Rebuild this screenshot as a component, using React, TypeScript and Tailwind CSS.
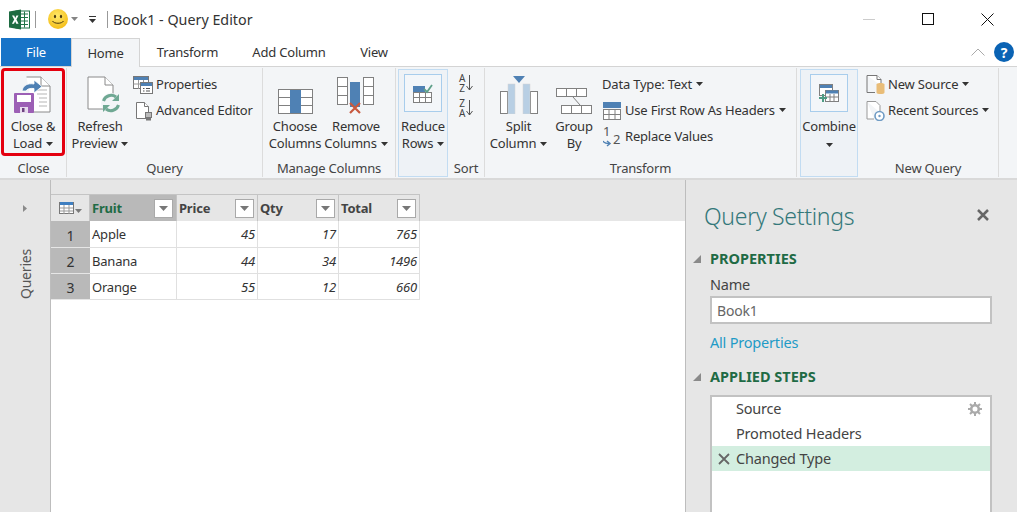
import type { ReactNode } from 'react'

function Caret({ className = '' }: { className?: string }) {
  return (
    <svg width="7" height="4" viewBox="0 0 7 4" className={`inline-block shrink-0 ${className}`}>
      <path d="M0 0h7L3.5 4z" fill="#333" />
    </svg>
  )
}

function ExcelIcon() {
  return (
    <svg width="21" height="21" viewBox="0 0 21 21">
      <rect x="7" y="2" width="13.5" height="17" fill="#fff" stroke="#217346" />
      <path d="M12 5h7M12 8.500h7M12 12h7M12 15.500h7M15.500 2.500v16" stroke="#217346" strokeWidth="1" />
      <path d="M0 2.500 12 .5v20L0 18.500z" fill="#1d6b41" />
      <path d="M3 6.500h2.200L6.300 9l1.100-2.500h2.100l-2.100 4 2.200 4.300H7.300L6.200 12.200 5 14.800H2.900l2.300-4.300z" fill="#fff" />
    </svg>
  )
}

function Smiley() {
  return (
    <svg width="20" height="20" viewBox="0 0 20 20">
      <defs>
        <radialGradient id="sm" cx="0.45" cy="0.35" r="0.7">
          <stop offset="0" stopColor="#ffe96a" />
          <stop offset="1" stopColor="#f4bb12" />
        </radialGradient>
      </defs>
      <circle cx="10" cy="10" r="10" fill="url(#sm)" />
      <ellipse cx="7" cy="7.500" rx="1.100" ry="1.700" fill="#4a3a10" />
      <ellipse cx="13" cy="7.500" rx="1.100" ry="1.700" fill="#4a3a10" />
      <path d="M4.500 12c1.500 3 9.500 3 11 0" fill="none" stroke="#4a3a10" strokeWidth="1" />
    </svg>
  )
}

function CloseLoadIcon() {
  return (
    <svg width="40" height="38" viewBox="0 0 40 38">
      <path d="M13.500 1H28l9 9v26H20" fill="#fff" stroke="#8a8a8a" />
      <path d="M28 1v9h9" fill="#fff" stroke="#8a8a8a" />
      <path d="M24 14h10M24 18h10M26 22h8M26 26h8M26 30h8" stroke="#b5b5b5" />
      <path d="M9 15c1-6 6-8 12-7V4l8 6.500-8 6.500v-4.500c-4-.5-7 .5-8 2.500z" fill="#4f81b4" stroke="#fff" strokeWidth=".8" />
      <rect x="1" y="17" width="20" height="20" rx="1" fill="#9c5fb5" />
      <rect x="4" y="19" width="14" height="7" fill="#fff" />
      <rect x="7" y="31" width="8" height="6" fill="#e8dcee" />
      <rect x="9" y="32" width="2.500" height="4" fill="#6d4280" />
    </svg>
  )
}

function RefreshIcon() {
  return (
    <svg width="34" height="38" viewBox="0 0 34 38">
      <path d="M1 1h17l8 8v24H1z" fill="#fff" stroke="#8a8a8a" />
      <path d="M18 1v8h8" fill="#fff" stroke="#8a8a8a" />
      <circle cx="24" cy="27" r="10" fill="#f3f5f7" />
      <path d="M16.500 25a8 8 0 0 1 12.500-4" fill="none" stroke="#6fa893" strokeWidth="3" />
      <path d="M31.500 29a8 8 0 0 1-12.500 4" fill="none" stroke="#6fa893" strokeWidth="3" />
      <path d="M32 18v7h-7zM16 36v-7h7z" fill="#6fa893" />
    </svg>
  )
}

function PropertiesIcon() {
  return (
    <svg width="20" height="18" viewBox="0 0 20 18">
      <rect x=".5" y=".5" width="15" height="12" fill="#fff" stroke="#777" />
      <rect x="1" y="1" width="14" height="3" fill="#4f81b4" />
      <path d="M.5 8h15M5.500 4v9M10.500 4v9" stroke="#999" />
      <rect x="7.500" y="6.500" width="12" height="11" fill="#fff" stroke="#777" />
      <rect x="8" y="7" width="11" height="3" fill="#4f81b4" />
      <path d="M10 12.500h1.500M13 12.500h4M10 15h1.500M13 15h4" stroke="#555" />
    </svg>
  )
}

function AdvancedIcon() {
  return (
    <svg width="18" height="19" viewBox="0 0 18 19" className="ml-[2px]">
      <path d="M1.500 .5h8l4 4v12h-12z" fill="#fff" stroke="#777" />
      <path d="M9.500 .5v4h4" fill="#fff" stroke="#777" />
      <path d="M10 10h7v6h-7zM11 16h5v2.500h-5z" fill="#777" />
      <path d="M11 12h5M11 14h5" stroke="#fff" />
    </svg>
  )
}

function ChooseColumnsIcon() {
  return (
    <svg width="35" height="25" viewBox="0 0 35 25">
      <rect x=".5" y=".5" width="34" height="24" fill="#fff" stroke="#808080" />
      <path d="M.5 8.500h34M.5 16.500h34" stroke="#808080" />
      <rect x="12" y="1" width="11" height="23" fill="#4f81b4" />
    </svg>
  )
}

function RemoveColumnsIcon() {
  return (
    <svg width="38" height="37" viewBox="0 0 38 37">
      <rect x=".5" y=".5" width="10" height="27" fill="#fff" stroke="#808080" />
      <rect x="26.500" y=".5" width="10" height="27" fill="#fff" stroke="#808080" />
      <path d="M.5 9.500h10M.5 18.500h10M26.500 9.500h10M26.500 18.500h10" stroke="#808080" />
      <rect x="13" y="5" width="10" height="25" fill="#4f81b4" />
      <path d="M13 26l10 10M23 26 13 36" stroke="#c8593f" strokeWidth="2.200" />
    </svg>
  )
}

function ReduceRowsIcon() {
  return (
    <svg width="20" height="19" viewBox="0 0 20 19">
      <rect x=".5" y="8.500" width="18" height="10" fill="#fff" stroke="#808080" />
      <path d="M.5 13.500h18M6.500 8v11M12.500 8v11" stroke="#808080" />
      <rect x="0" y="2" width="12" height="6" fill="#4f81b4" />
      <path d="M11 5l3 3 5-7" fill="none" stroke="#5fa08a" strokeWidth="1.800" />
    </svg>
  )
}

function SortIcon({ letters }: { letters: string }) {
  return (
    <div className="flex items-center h-[25px] gap-[1px]">
      <div className="whitespace-pre-line text-center text-[10px] leading-[10px] text-[#444]">{letters}</div>
      <svg width="7" height="18" viewBox="0 0 7 18">
        <path d="M3.500 1v15M.5 12l3 4 3-4" fill="none" stroke="#555" />
      </svg>
    </div>
  )
}

function SplitColumnIcon() {
  return (
    <svg width="38" height="38" viewBox="0 0 38 38">
      <rect x=".5" y="15.500" width="7" height="22" fill="#fff" stroke="#808080" />
      <rect x="30.500" y="15.500" width="7" height="22" fill="#fff" stroke="#808080" />
      <rect x="8" y="8" width="7" height="30" fill="#b8cfe4" stroke="#d4d4d4" strokeWidth=".5" />
      <rect x="23" y="8" width="7" height="30" fill="#b8cfe4" stroke="#d4d4d4" strokeWidth=".5" />
      <path d="M13 0h12l-6 7z" fill="#4f81b4" />
    </svg>
  )
}

function GroupByIcon() {
  return (
    <svg width="37" height="26" viewBox="0 0 37 26">
      <rect x=".5" y=".5" width="30" height="8" fill="#fff" stroke="#808080" />
      <path d="M10.500 1v8M20.500 1v8" stroke="#808080" />
      <path d="M17 9l7 8" stroke="#808080" />
      <rect x="5.500" y="17.500" width="30" height="8" fill="#fff" stroke="#808080" />
      <path d="M15.500 18v8M25.500 18v8" stroke="#808080" />
    </svg>
  )
}

function FirstRowIcon() {
  return (
    <svg width="20" height="18" viewBox="0 0 20 18">
      <rect x="1" y="0" width="18" height="6" fill="#4f81b4" />
      <rect x="1.500" y="7.500" width="17" height="10" fill="#fff" stroke="#808080" />
      <path d="M1 12.500h18M7 8v10M13 8v10" stroke="#808080" />
    </svg>
  )
}

function ReplaceIcon() {
  return (
    <div className="relative w-[20px] h-[22px] text-[#555] text-[13px]">
      <span className="absolute left-[1px] top-[-4px]">1</span>
      <span className="absolute left-[11px] top-[4px]">2</span>
      <svg width="9" height="7" viewBox="0 0 9 7" className="absolute left-[1px] top-[14px]">
        <path d="M0 1c1 2 3 2.500 6 2.500M4 1l3 2.500L4 6" fill="none" stroke="#4f81b4" strokeWidth="1.500" />
      </svg>
    </div>
  )
}

function CombineIcon() {
  return (
    <svg width="20" height="19" viewBox="0 0 20 19">
      <rect x=".5" y=".5" width="13" height="11" fill="#fff" stroke="#808080" />
      <rect x="1" y="1" width="12" height="3" fill="#4f81b4" />
      <rect x="6.500" y="6.500" width="13" height="11" fill="#fff" stroke="#808080" />
      <rect x="7" y="6.500" width="12" height="3" fill="#4f81b4" />
      <path d="M7 13h12M11 10v8M15 10v8" stroke="#808080" />
      <path d="M4 10v8M0 14h8" stroke="#4f9c84" strokeWidth="2" />
    </svg>
  )
}

function NewSourceIcon() {
  return (
    <svg width="19" height="20" viewBox="0 0 19 20">
      <path d="M1 .5h10l4 4v6M8 17.500H1z" fill="#fff" stroke="#777" />
      <path d="M11 .5v4h4" fill="#fff" stroke="#777" />
      <path d="M1 .5v17h8" fill="none" stroke="#777" />
      <path d="M10.500 9.500c0-2 8-2 8 0v8c0 2-8 2-8 0z" fill="#e9bd78" />
    </svg>
  )
}

function RecentSourcesIcon() {
  return (
    <svg width="19" height="20" viewBox="0 0 19 20">
      <path d="M1 .5h9l4 4v7M8 18H1V.5" fill="#fff" stroke="#999" />
      <circle cx="13.500" cy="15" r="4.500" fill="#fff" stroke="#6f9bc4" strokeWidth="1.600" />
      <circle cx="13.500" cy="15" r="1.200" fill="#6f9bc4" />
    </svg>
  )
}

function BigButton({ width, icon, lines, caret }: { width: string; icon: ReactNode; lines: string[]; caret?: boolean }) {
  return (
    <div className={`${width} flex flex-col items-center shrink-0`}>
      <div className="h-[50px] pt-[8px] pb-[4px] flex items-end justify-center">{icon}</div>
      {lines.map((line, i) => (
        <div key={line} className="h-[17px] leading-[17px] whitespace-nowrap flex items-center gap-[4px]">
          {line}
          {caret && i === lines.length - 1 && <Caret />}
        </div>
      ))}
    </div>
  )
}

function SmallButton({ icon, label, caret, gap = 'gap-[3px]' }: { icon: ReactNode; label: string; caret?: boolean; gap?: string }) {
  return (
    <div className={`h-[26px] flex items-center whitespace-nowrap ${gap}`}>
      {icon}
      <span>{label}</span>
      {caret && <Caret className="ml-[1px] mb-[3px]" />}
    </div>
  )
}

function Group({ width, label, children, className = '' }: { width: string; label?: string; children: ReactNode; className?: string }) {
  return (
    <div className={`${width} shrink-0 flex flex-col border-r border-[#dcdcdc] my-[1px] ${className}`}>
      <div className="flex-1 flex">{children}</div>
      <div className="h-[19px] pt-[1px] leading-[19px] text-center text-[#444]">{label}</div>
    </div>
  )
}

function ToggleButton({ width, icon, lines, caret, iconBox }: { width: string; icon: ReactNode; lines: ReactNode[]; caret?: boolean; iconBox: string }) {
  return (
    <div className={`${width} shrink-0 my-[1px] mt-[2px] bg-[#eef2f6] border border-[#c2dcf2] flex flex-col items-center`}>
      <div className={`${iconBox} mt-[4px] mb-[6px] border border-[#a8cdec] bg-[#f3f6f9] flex items-center justify-center`}>{icon}</div>
      {lines.map((line, i) => (
        <div key={i} className="h-[17px] leading-[17px] whitespace-nowrap flex items-center gap-[4px]">
          {line}
          {caret && i === lines.length - 1 && <Caret />}
        </div>
      ))}
    </div>
  )
}

const rows = [
  ['1', 'Apple', '45', '17', '765'],
  ['2', 'Banana', '44', '34', '1496'],
  ['3', 'Orange', '55', '12', '660'],
]

function HeaderCell({ label, active }: { label: string; active?: boolean }) {
  return (
    <div className={`flex items-center justify-between pl-[2px] pr-[3px] pt-[1px] border-r border-[#c4c4c4] font-bold ${active ? 'bg-[#b9b9b9] text-[#1f6b45]' : 'bg-[#e6e6e6] text-[#444]'}`}>
      <span>{label}</span>
      <div className="w-[19px] h-[19px] bg-white border border-[#a9a9a9] flex items-center justify-center">
        <svg width="9" height="5" viewBox="0 0 9 5">
          <path d="M0 0h9L4.500 5z" fill="#777" />
        </svg>
      </div>
    </div>
  )
}

export default function App() {
  return (
    <div className="w-[1017px] h-[512px] overflow-hidden bg-white flex flex-col text-[13px] text-[#333] font-['Noto_Sans',sans-serif] tracking-[-0.2px]">
      {/* title bar */}
      <div className="h-[38px] flex items-center shrink-0">
        <div className="w-[35px] pl-[9px] flex"><ExcelIcon /></div>
        <div className="w-[1px] h-[17px] bg-[#999]" />
        <div className="ml-[12px] flex items-center">
          <Smiley />
          <Caret className="ml-[3px] opacity-60" />
          <div className="ml-[11px] flex flex-col items-center gap-[2px]">
            <div className="w-[7px] h-[1px] bg-[#333]" />
            <Caret />
          </div>
        </div>
        <div className="ml-[11px] w-[1px] h-[17px] bg-[#999]" />
        <div className="ml-[5px] pt-[2px] text-[14.3px] text-[#333] tracking-[0px]">Book1 - Query Editor</div>
        <div className="flex-1" />
        <div className="w-[59px] flex justify-center"><div className="w-[12px] h-[1px] bg-[#ccc]" /></div>
        <div className="w-[59px] flex justify-center"><div className="w-[12px] h-[12px] border border-[#111]" /></div>
        <div className="w-[60px] flex justify-center">
          <svg width="13" height="13" viewBox="0 0 13 13"><path d="M.5.5l12 12M12.500.5l-12 12" stroke="#111" /></svg>
        </div>
      </div>

      {/* tabs */}
      <div className="h-[29px] shrink-0 flex items-stretch border-b border-[#d4d4d4] pl-[1px]">
        <div className="w-[70px] h-[28px] pt-[1px] bg-[#1874c8] text-white flex items-center justify-center">File</div>
        <div className="w-[69px] h-[29px] pt-[1px] bg-[#f3f5f7] border-x border-t border-[#d4d4d4] flex items-center justify-center">Home</div>
        <div className="w-[95px] h-[28px] pt-[1px] flex items-center justify-center">Transform</div>
        <div className="w-[108px] h-[28px] pt-[1px] flex items-center justify-center">Add Column</div>
        <div className="w-[62px] h-[28px] pt-[1px] flex items-center justify-center">View</div>
        <div className="flex-1" />
        <div className="flex items-center gap-[9px] pr-[3px]">
          <svg width="14" height="8" viewBox="0 0 14 8"><path d="M.5 7.500 7 1l6.500 6.500" fill="none" stroke="#aaa" /></svg>
          <div className="w-[20px] h-[20px] rounded-full bg-[#0a63b4] text-white font-bold text-[14px] flex items-center justify-center">?</div>
        </div>
      </div>

      {/* ribbon */}
      <div className="h-[113px] shrink-0 bg-[#f3f5f7] border-b-2 border-[#d9d9d9] flex text-center pl-[1px]">
        <div className="w-[66px] shrink-0 flex flex-col border-r border-[#dcdcdc] my-[1px]">
          <div className="w-[64px] h-[88px] border-[3px] border-[#e4000f] rounded-[4px] flex flex-col items-center">
            <div className="h-[47px] pt-[5px] flex justify-center"><CloseLoadIcon /></div>
            <div className="h-[17px] leading-[17px] whitespace-nowrap">Close &amp;</div>
            <div className="h-[17px] leading-[17px] whitespace-nowrap flex items-center gap-[4px]">Load <Caret /></div>
          </div>
          <div className="mt-auto h-[19px] pt-[1px] leading-[19px] text-center text-[#444]">Close</div>
        </div>

        <Group width="w-[196px]" label="Query">
          <BigButton width="w-[66px]" icon={<div className="pl-[7px] flex"><RefreshIcon /></div>} lines={['Refresh', 'Preview']} caret />
          <div className="pt-[4px] text-left">
            <SmallButton icon={<PropertiesIcon />} label="Properties" />
            <SmallButton icon={<AdvancedIcon />} label="Advanced Editor" />
          </div>
        </Group>

        <Group width="w-[133px]" label="Manage Columns">
          <BigButton width="w-[64px]" icon={<ChooseColumnsIcon />} lines={['Choose', 'Columns']} />
          <BigButton width="w-[58px]" icon={<RemoveColumnsIcon />} lines={['Remove', 'Columns']} caret />
        </Group>

        <div className="w-[2px]" />
        <ToggleButton width="w-[50px]" iconBox="w-[38px] h-[38px]" icon={<ReduceRowsIcon />} lines={['Reduce', 'Rows']} caret />

        <Group width="w-[37px]" label="Sort">
          <div className="w-full pt-[2px] pl-[11px] flex flex-col">
            <SortIcon letters={'A\nZ'} />
            <SortIcon letters={'Z\nA'} />
          </div>
        </Group>

        <Group width="w-[312px]" label="Transform">
          <BigButton width="w-[67px]" icon={<SplitColumnIcon />} lines={['Split', 'Column']} caret />
          <BigButton width="w-[44px]" icon={<GroupByIcon />} lines={['Group', 'By']} />
          <div className="pt-[4px] pl-[6px] text-left">
            <SmallButton icon={null} label="Data Type: Text" caret />
            <SmallButton icon={<FirstRowIcon />} label="Use First Row As Headers" caret />
            <SmallButton icon={<ReplaceIcon />} label="Replace Values" />
          </div>
        </Group>

        <div className="w-[3px]" />
        <ToggleButton
          width="w-[58px]"
          iconBox="w-[38px] h-[38px]"
          icon={<CombineIcon />}
          lines={['Combine', <Caret key="c" className="mt-[3px]" />]}
        />

        <Group width="w-[141px]" label="New Query">
          <div className="pt-[4px] pl-[8px] text-left">
            <SmallButton icon={<NewSourceIcon />} label="New Source" caret />
            <SmallButton icon={<RecentSourcesIcon />} label="Recent Sources" caret />
          </div>
        </Group>
      </div>

      {/* main */}
      <div className="flex-1 flex min-h-0">
        <div className="w-[51px] shrink-0 bg-[#e6e6e6] border-r border-[#bdbdbd] flex flex-col items-center pt-[25px]">
          <svg width="4" height="7" viewBox="0 0 4 7"><path d="M0 0l4 3.500L0 7z" fill="#8a8a8a" /></svg>
          <div className="mt-[37px] text-[#555] text-[14px] [writing-mode:vertical-rl] rotate-180">Queries</div>
        </div>

        <div className="w-[634px] shrink-0 bg-white flex flex-col">
          <div className="h-[41px] shrink-0 bg-[#e6e6e6] flex items-end">
            <div className="grid grid-cols-[39px_87px_81px_81px_81px] h-[27px] border-t border-[#c4c4c4]">
              <div className="bg-[#e6e6e6] border-r border-[#c4c4c4] flex items-center justify-center gap-[1px]">
                <svg width="15" height="12" viewBox="0 0 15 12">
                  <rect x=".5" y=".5" width="14" height="11" fill="#fff" stroke="#777" />
                  <rect x="1" y="0" width="13" height="3" fill="#3f7fc1" />
                  <path d="M1 6h13M1 9h13M5 3v9M10 3v9" stroke="#999" />
                </svg>
                <Caret className="mt-[6px] opacity-60" />
              </div>
              <HeaderCell label="Fruit" active />
              <HeaderCell label="Price" />
              <HeaderCell label="Qty" />
              <HeaderCell label="Total" />
            </div>
          </div>
          <div className="grid grid-cols-[39px_87px_81px_81px_81px] grid-rows-[27px_26px_26px] w-max">
            {rows.map(r => (
              <div key={r[0]} className="contents">
                <div className="bg-[#b9b9b9] border-b border-[#e6e6e6] pt-[2px] flex items-center justify-center text-[14px]">{r[0]}</div>
                <div className="border-r border-b border-[#e0e0e0] pl-[2px] pt-[2px] flex items-center">{r[1]}</div>
                <div className="border-r border-b border-[#e0e0e0] pr-[2px] pt-[2px] flex items-center justify-end italic">{r[2]}</div>
                <div className="border-r border-b border-[#e0e0e0] pr-[2px] pt-[2px] flex items-center justify-end italic">{r[3]}</div>
                <div className="border-r border-b border-[#e0e0e0] pr-[2px] pt-[2px] flex items-center justify-end italic">{r[4]}</div>
              </div>
            ))}
          </div>
        </div>

        {/* query settings */}
        <div className="flex-1 bg-[#e6e6e6] border-l border-[#bdbdbd] pl-[7px] pr-[25px] min-w-0">
          <div className="h-[32px] mt-[20px] ml-[11px] flex items-center justify-between">
            <div className="text-[23px] font-light text-[#34787a] tracking-[-0.3px]">Query Settings</div>
            <svg width="12" height="12" viewBox="0 0 12 12" className="mr-[3px] mb-[3px]"><path d="M1 1l10 10M11 1 1 11" stroke="#666" strokeWidth="2.500" /></svg>
          </div>
          <div className="mt-[17px] h-[20px] flex items-center gap-[9px] font-bold text-[14.5px] tracking-[0px] text-[#1f6b45]">
            <svg width="8" height="8" viewBox="0 0 8 8"><path d="M8 0v8H0z" fill="#8a8a8a" /></svg>
            PROPERTIES
          </div>
          <div className="ml-[17px] text-[14.5px]">
            <div className="mt-[5px] h-[20px] leading-[20px] text-[#444]">Name</div>
            <div className="mt-[2px] h-[28px] bg-white border-2 border-[#c2c2c2] pl-[5px] flex items-center text-[14px] text-[#666]">Book1</div>
            <div className="mt-[8px] h-[20px] leading-[20px] text-[#1f9bc7]">All Properties</div>
          </div>
          <div className="mt-[15px] h-[20px] flex items-center gap-[9px] font-bold text-[14.5px] tracking-[0px] text-[#1f6b45]">
            <svg width="8" height="8" viewBox="0 0 8 8"><path d="M8 0v8H0z" fill="#8a8a8a" /></svg>
            APPLIED STEPS
          </div>
          <div className="mt-[8px] ml-[17px] h-[140px] bg-white border-2 border-[#c2c2c2] text-[14.5px] text-[#444]">
            <div className="h-[24px] pl-[24px] pr-[8px] flex items-center justify-between">
              <span>Source</span>
              <svg width="14" height="14" viewBox="0 0 14 14">
                <circle cx="7" cy="7" r="3.800" fill="none" stroke="#aaa" strokeWidth="2.600" />
                <path d="M7 0v3M7 11v3M0 7h3M11 7h3M2 2l2 2M10 10l2 2M12 2l-2 2M4 10l-2 2" stroke="#aaa" strokeWidth="2" />
              </svg>
            </div>
            <div className="h-[25px] pl-[24px] flex items-center">Promoted Headers</div>
            <div className="h-[25px] bg-[#d3eee0] pl-[6px] flex items-center gap-[6px]">
              <svg width="12" height="12" viewBox="0 0 12 12"><path d="M1 1l10 10M11 1 1 11" stroke="#666" strokeWidth="1.800" /></svg>
              <span>Changed Type</span>
            </div>
          </div>
        </div>
      </div>
    </div>
  )
}
